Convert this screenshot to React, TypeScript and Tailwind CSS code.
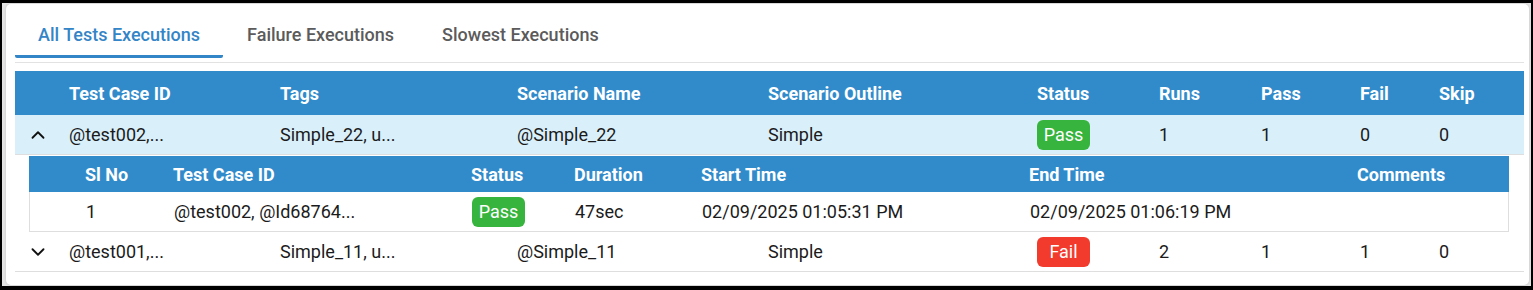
import React from "react";
import { ChevronUp, ChevronDown } from "lucide-react";

const mainCols = "grid grid-cols-[42px_211px_237px_251px_269px_122px_102px_99px_79px_95px]";
const subCols = "grid grid-cols-[44px_88px_298px_103px_127px_328px_328px_162px]";

function Badge({ kind }: { kind: "Pass" | "Fail" }) {
  return (
    <span
      className={
        "inline-flex h-[30px] w-[53px] items-center justify-center rounded-[6px] text-white " +
        (kind === "Pass" ? "bg-[#37b43d]" : "bg-[#f23b2c]")
      }
    >
      {kind}
    </span>
  );
}

const cell = "px-3 flex items-center whitespace-nowrap overflow-hidden";

export default function App() {
  const header = ["", "Test Case ID", "Tags", "Scenario Name", "Scenario Outline", "Status", "Runs", "Pass", "Fail", "Skip"];
  const subHeader = ["", "Sl No", "Test Case ID", "Status", "Duration", "Start Time", "End Time", "Comments"];
  return (
    <div
      className="w-[1533px] h-[290px] overflow-hidden border-solid border-black border-t-[3px] border-l-2 border-r-2 border-b-[4px] bg-[#e4e4e4] pl-[4px] pr-[2px] pt-[1px] pb-[1px] text-[18px] text-[#1b1b1b]"
      style={{ fontFamily: "Roboto, 'Liberation Sans', sans-serif" }}
    >
      <div className="h-full bg-white rounded-[5px] shadow-[0_0_3px_rgba(0,0,0,0.15)] pl-[9px] pr-[5px] pt-[6px]">
        {/* Tabs */}
        <div className="flex h-[48px]">
          <div className="flex items-center pt-[4px] px-[23px] font-medium text-[#3385c7] border-b-[3px] border-[#3286c7] rounded-b-[2px]">
            All Tests Executions
          </div>
          <div className="flex items-center pt-[4px] px-[24px] font-medium text-[#5b5b5b] pb-[3px]">Failure Executions</div>
          <div className="flex items-center pt-[4px] px-[24px] font-medium text-[#5b5b5b] pb-[3px]">Slowest Executions</div>
        </div>
        <div className="mt-[4px] h-px bg-[#e2e2e2]" />
        {/* Table */}
        <div className="mt-[8px]">
          <div className={mainCols + " h-[44px] bg-[#318bcb] text-white font-bold"}>
            {header.map((h, i) => (
              <div key={i} className={cell}>
                {h}
              </div>
            ))}
          </div>
          {/* Row 1 */}
          <div className={mainCols + " h-[40px] bg-[#d9f0fb] border-b border-[#dedede]"}>
            <div className="flex items-center pl-[12px]">
              <ChevronUp size={22} strokeWidth={2} color="#111" />
            </div>
            <div className={cell}>@test002,...</div>
            <div className={cell}>Simple_22, u...</div>
            <div className={cell}>@Simple_22</div>
            <div className={cell}>Simple</div>
            <div className={cell}>
              <Badge kind="Pass" />
            </div>
            <div className={cell}>1</div>
            <div className={cell}>1</div>
            <div className={cell}>0</div>
            <div className={cell}>0</div>
          </div>
          {/* Nested */}
          <div className="pl-[14px] pr-[15px] pt-[1px]">
            <div className={subCols + " h-[36px] bg-[#318bcb] text-white font-bold"}>
              {subHeader.map((h, i) => (
                <div key={i} className={cell}>
                  {h}
                </div>
              ))}
            </div>
            <div className={subCols + " h-[40px] border-l border-r border-b border-[#dedede]"}>
              <div />
              <div className={cell}>1</div>
              <div className={cell}>@test002, @Id68764...</div>
              <div className={cell}>
                <Badge kind="Pass" />
              </div>
              <div className={cell}>47sec</div>
              <div className={cell}>02/09/2025 01:05:31 PM</div>
              <div className={cell}>02/09/2025 01:06:19 PM</div>
              <div className={cell}></div>
            </div>
          </div>
          {/* Row 2 */}
          <div className={mainCols + " h-[40px] border-b border-[#dedede]"}>
            <div className="flex items-center pl-[12px]">
              <ChevronDown size={22} strokeWidth={2} color="#111" />
            </div>
            <div className={cell}>@test001,...</div>
            <div className={cell}>Simple_11, u...</div>
            <div className={cell}>@Simple_11</div>
            <div className={cell}>Simple</div>
            <div className={cell}>
              <Badge kind="Fail" />
            </div>
            <div className={cell}>2</div>
            <div className={cell}>1</div>
            <div className={cell}>1</div>
            <div className={cell}>0</div>
          </div>
        </div>
      </div>
    </div>
  );
}
